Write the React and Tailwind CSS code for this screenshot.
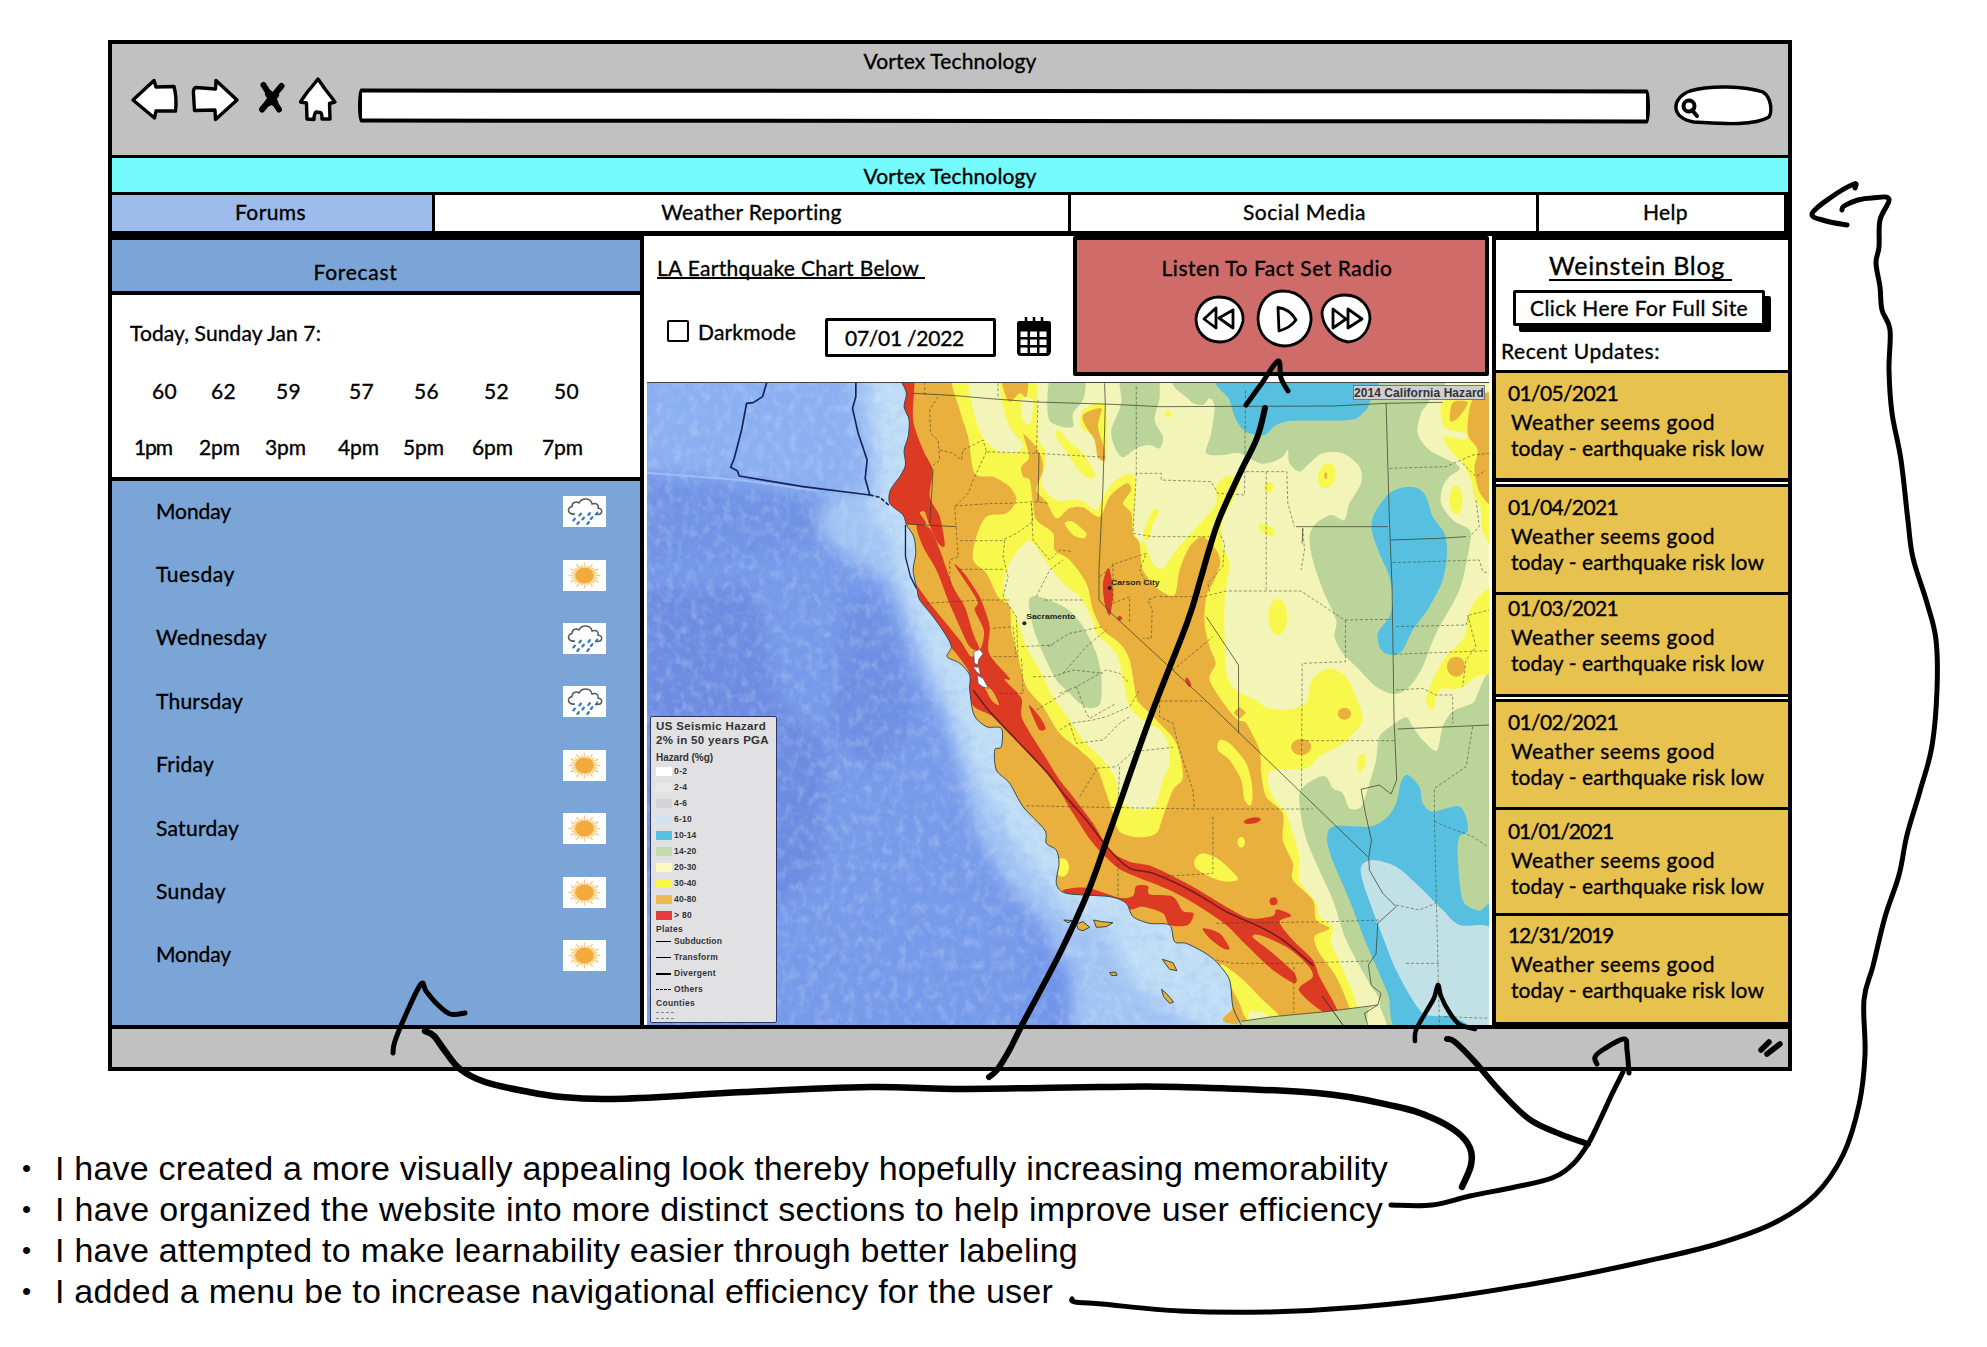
import React, { useLayoutEffect, useRef } from "react";

/* Text set to a fixed measure: letter spacing is worked out from the natural width. */
function Fit({ w, children, className = "" }) {
  const ref = useRef(null);
  useLayoutEffect(() => {
    const el = ref.current;
    el.style.letterSpacing = "0px";
    const natural = el.getBoundingClientRect().width;
    const n = el.textContent.length;
    el.style.letterSpacing = (w - natural) / n + "px";
  }, [w, children]);
  return (
    <span ref={ref} className={"inline-block w-fit whitespace-pre leading-none " + className}>
      {children}
    </span>
  );
}

const pairs = (s) => s.trim().split(/\s+/).map((p) => p.split(",").map(Number));

/* Catmull-Rom curve through a list of points. */
function curve(s, closed = false, k = 7) {
  const p = pairs(s);
  const n = p.length;
  const at = (i) => (closed ? p[(i + n) % n] : p[Math.max(0, Math.min(n - 1, i))]);
  let d = `M${p[0][0]},${p[0][1]}`;
  for (let i = 0; i < (closed ? n : n - 1); i++) {
    const a = at(i - 1), b = at(i), c = at(i + 1), e = at(i + 2);
    d += `C${b[0] + (c[0] - a[0]) / k},${b[1] + (c[1] - a[1]) / k} ${c[0] - (e[0] - b[0]) / k},${c[1] - (e[1] - b[1]) / k} ${c[0]},${c[1]}`;
  }
  return closed ? d + "Z" : d;
}

const Blob = ({ p, f }) => <path d={curve(p, true)} fill={f} />;

const OR = "#e9b03e", RD = "#dd3a24", YE = "#f8f74c", CR = "#f3f5b8", GR = "#bbd499", BL = "#57c0e0", LT = "#c2e1e7";

const LAND =
  "785,36 800,70 793,110 808,150 805,200 793,240 797,285 780,320 752,360 750,400 790,435 800,465 822,500 828,550 820,600 832,660 840,690 880,740 915,790 935,830 922,860 960,880 990,915 990,960 1003,1035 1040,1070 1085,1075 1085,1130 1065,1140 1070,1200 1110,1240 1150,1310 1215,1380 1220,1420 1250,1440 1258,1480 1250,1540 1280,1570 1410,1580 1460,1600 1480,1640 1530,1660 1590,1665 1605,1715 1640,1720 1690,1745 1730,1775 1770,1830 1780,1910 1805,1965 2560,1965 2560,30 785,30";

const countyLines = [
  "855,36 855,75", "895,80 870,120 872,190 895,210 900,270 875,290", "900,240 940,250 965,270 970,240 1030,210 1040,245 1190,250 1400,262",
  "1040,245 1000,330 985,370 945,410 955,560", "945,408 1060,400 1110,400 1180,395 1230,400", "1195,90 1190,250", "1075,40 1075,85",
  "960,512 1085,512 1130,490 1180,455 1175,400", "955,560 930,570 930,650", "960,598 1095,598", "1095,510 1090,560 1105,620 1090,680 1130,740 1135,870",
  "860,700 940,695 1030,690 1110,690", "1060,775 1120,770 1130,860 1060,860", "1145,830 1240,825", "1175,400 1180,510 1230,570 1260,540 1300,545",
  "1190,680 1230,600 1270,570", "1215,690 1330,690", "1225,830 1290,790 1390,770", "1270,910 1340,830 1400,780", "1180,920 1240,920 1300,900 1390,910",
  "1260,970 1310,950 1400,900 1440,910 1470,940", "1310,950 1340,1030 1350,1045 1430,1000", "1080,970 1150,970 1145,860", "1190,1020 1290,960",
  "1260,1080 1290,1060 1360,1050 1400,1040 1470,1010 1500,960", "1290,1060 1310,1120 1390,1110 1440,1060 1470,1040", "1160,1307 1290,1310 1665,1317 2020,1317",
  "1560,990 1560,1040 1600,1060 1620,1140 1660,1260 1665,1317", "1370,1200 1365,1195 1430,1190 1480,1145 1600,1132", "1320,1280 1370,1200", "1440,1190 1435,1310",
  "1490,50 1490,310 1565,310 1565,330 1715,335 1735,370 1815,375 1818,60", "1490,310 1480,490 1540,500 1710,500", "1820,305 1942,305 1945,400 1965,470",
  "1880,305 1880,660", "1990,475 1995,540 1985,600", "1560,680 1690,680 1760,663 1985,663 2115,750 2255,748", "2118,750 2118,875 1988,880 1986,1260",
  "1710,665 1705,640 1750,590 1755,520 1740,490", "1380,620 1430,580 1520,550 1500,600 1520,640", "1420,580 1420,700 1470,680 1470,760",
  "1550,680 1525,690 1538,720 1535,805 1510,805", "1600,900 1720,800", "1560,993 1700,993", "1985,1112 2265,1112", "1720,1340 1720,1510 1560,1520",
  "1730,1660 2080,1655 2220,1650", "1730,1770 1780,1780 1960,1780 2190,1773", "1963,1790 1963,1930", "1435,1480 1435,1660", "2250,295 2420,290 2500,255 2550,250",
  "2260,578 2520,570 2530,605 2550,610", "2270,770 2480,765 2490,735 2550,720", "2265,853 2390,848 2550,842", "2270,960 2350,955 2390,975 2440,975 2440,1060",
  "2500,1070 2480,1190 2385,1255 2385,1340 2400,1965", "2385,1355 2460,1385 2500,1400 2545,1430", "2270,1605 2340,1620 2390,1600", "2300,1780 2400,1780",
  "2510,390 2520,470 2490,500", "2485,735 2510,830 2480,870 2470,950", "2470,280 2510,320 2540,300", "2415,1940 2550,1945",
];

const solidLines = [
  "820,70 900,74 960,78 1050,86 1190,96 1420,103 1560,110 2080,108 2240,100 2410,97", "1395,40 1397,105 1390,350 1378,600 1378,690 1410,725 1700,993 2185,1460",
  "1700,740 1797,885 1797,1090", "2240,100 2250,450 2258,650 2264,1050 2272,1230 2255,1272 2220,1245 2165,1258 2178,1330 2196,1410 2188,1462 2190,1500 2230,1570 2270,1610 2215,1660 2210,1750 2187,1785 2195,1845 2225,1870 2215,1905 2175,1930 2185,1965",
  "1970,470 2245,470", "2255,510 2400,505 2480,500", "1990,475 1988,520", "2275,1077 2390,1072 2550,1065", "870,290 880,300 870,460", "800,462 950,470", "1198,250 1195,395",
  "1805,1954 1900,1940 2060,1925 2215,1905",
];

function HazardMap() {
  return (
    <svg className="block h-full w-full" viewBox="21 36 2528 1929" preserveAspectRatio="none">
      <defs>
        <clipPath id="land"><path d={curve(LAND, true)} /></clipPath>
        <filter id="soft" x="-30%" y="-30%" width="160%" height="160%"><feGaussianBlur stdDeviation="24" /></filter>
        <filter id="relief" x="0" y="0" width="100%" height="100%">
          <feTurbulence type="fractalNoise" baseFrequency="0.028 0.042" numOctaves="5" seed="11" />
          <feColorMatrix values="0 0 0 0 .28  0 0 0 0 .4  0 0 0 0 .8  1.7 0 0 0 -.74" />
        </filter>
        <filter id="foam" x="0" y="0" width="100%" height="100%">
          <feTurbulence type="fractalNoise" baseFrequency="0.04 0.03" numOctaves="5" seed="4" />
          <feColorMatrix values="0 0 0 0 .75  0 0 0 0 .88  0 0 0 0 1  0 1.5 0 0 -.68" />
        </filter>
      </defs>
      <rect x="0" y="0" width="2600" height="2000" fill="#769aea" />
      <g filter="url(#soft)">
        <path d="M0,0H700V400L300,330L0,300Z" fill="#8bb0f2" />
        <path d="M0,320L300,345L520,385L560,520L380,560L0,600Z" fill="#7093e5" />
        <path d="M0,650H340L420,1000L560,1120L540,1500L300,1700L0,1500Z" fill="#6c8be1" />
        <path d={curve("650,0 655,150 690,330 560,400 540,480 620,560 740,640 790,760 840,900 900,1010 960,1200 1020,1400 1120,1560 1240,1700 1280,1980 1850,1980 1800,1500 1300,900 900,300 850,0", true)} fill="#a3c5f4" />
        <path d={curve("700,0 720,300 700,420 760,520 780,640 830,760 880,900 960,1080 1000,1200 1120,1400 1200,1520 1300,1640 1420,1700 1500,1850 1800,1980 1800,1500 1300,900 900,300 850,0", true)} fill="#c0def6" />
        <path d="M1180,1700L1300,1790L1300,2000H1150Z" fill="#6f94ea" />
        <path d="M610,680L690,670L790,850L820,1080L700,1200L560,1100Z" fill="#6d8fe3" />
      </g>
      <rect x="21" y="36" width="2528" height="1929" filter="url(#relief)" opacity=".32" />
      <rect x="21" y="36" width="2528" height="1929" filter="url(#foam)" opacity=".38" />
      <path d="M21,308L300,330L530,362" fill="none" stroke="#a9c8f6" strokeWidth="6" opacity=".7" />
      <g fill="none" stroke="#14235c" strokeWidth="5" strokeLinejoin="round">
        <path d="M381,36L368,80L340,98L320,100L305,180L283,265L272,292L292,302L298,318L490,350L690,375L676,325L682,270L655,190L638,115L648,80L648,36" />
        <path d="M690,375L720,382L750,408" strokeDasharray="12 6" />
        <path d="M797,465V560L812,620L830,655" strokeWidth="4" />
      </g>

      <g clipPath="url(#land)">
        <rect x="700" y="0" width="1900" height="2000" fill={CR} />
        <Blob f={YE} p="945,20 1190,20 1195,180 1220,260 1205,340 1250,390 1320,390 1370,420 1390,380 1430,330 1485,320 1482,500 1515,520 1540,580 1570,595 1610,540 1690,450 1730,400 1730,350 1760,320 1800,330 1780,390 1750,450 1750,530 1770,580 1755,700 1760,900 1790,960 1850,990 1880,1012 1940,1020 2000,1000 2010,950 2025,920 2070,895 2120,920 2150,980 2170,1040 2160,1070 2110,1120 2040,1160 2000,1195 1900,1200 1885,1230 1900,1280 1940,1330 1960,1390 1980,1460 1980,1530 2030,1600 2040,1640 2080,1670 2075,1720 2120,1820 2155,1915 2150,1980 900,1980 600,1000 600,20" />
        <Blob f={OR} p="600,20 945,20 1150,190 1200,250 1210,300 1190,360 1220,395 1250,445 1290,415 1330,412 1380,440 1410,380 1460,340 1475,360 1450,400 1475,430 1480,490 1500,520 1510,600 1560,660 1605,675 1620,600 1650,530 1690,500 1730,540 1742,580 1720,640 1700,680 1695,760 1710,830 1728,880 1710,930 1760,1010 1795,1050 1820,1060 1860,1140 1865,1210 1880,1280 1930,1330 1930,1410 1960,1480 1960,1530 2020,1590 2030,1650 2070,1675 2025,1700 2040,1750 2090,1820 2130,1915 2140,1990 900,1990 600,1000" />
        <Blob f={YE} p="945,10 960,120 985,200 1005,310 1060,320 1110,350 1130,390 1100,430 1040,440 1010,500 1000,570 1040,610 1075,680 1110,710 1115,780 1135,860 1160,950 1210,1010 1260,1090 1320,1140 1370,1190 1400,1270 1420,1330 1440,1385 1500,1402 1550,1390 1570,1340 1600,1260 1630,1220 1610,1120 1560,1060 1500,1000 1490,980 1470,870 1440,820 1390,780 1360,720 1340,640 1290,570 1245,540 1240,490 1190,450 1180,400 1170,330 1150,320 1145,290 1168,260 1150,190 1130,100 1140,10" />
        <Blob f={CR} p="985,10 1070,10 1085,90 1110,170 1150,225 1120,250 1060,235 1015,170" />
        <Blob f={OR} p="1090,20 1160,20 1160,80 1140,70 1110,95 1092,60" />
        <Blob f={CR} p="1145,90 1180,90 1172,160 1150,150" />
        <Blob f={CR} p="1195,30 1240,30 1232,150 1300,170 1370,110 1392,250 1350,330 1290,385 1250,388 1212,340 1220,250 1195,200" />
        <Blob f={CR} p="1160,515 1120,560 1095,620 1095,680 1130,740 1160,830 1200,900 1240,980 1290,1050 1330,1110 1390,1170 1425,1220 1440,1280 1470,1315 1520,1320 1550,1300 1570,1230 1590,1180 1585,1120 1560,1080 1510,1050 1470,1010 1450,930 1430,850 1370,790 1360,750 1320,680 1270,640 1210,560 1180,518" />
        <Blob f={GR} p="1168,690 1200,680 1280,715 1330,770 1370,850 1385,920 1382,1000 1350,1015 1320,1000 1280,960 1250,930 1210,850 1180,770" />
        <Blob f={GR} p="1235,20 1330,20 1332,85 1300,130 1300,170 1260,168 1225,140" />
        <Blob f={GR} p="1445,20 1548,20 1560,80 1545,150 1570,200 1560,235 1530,225 1490,235 1450,262 1425,230 1415,180 1445,100" />
        <Blob f={YE} p="1255,180 1290,215 1330,250 1365,310 1355,325 1325,310 1290,260 1250,200" />
        <Blob f={YE} p="1330,120 1395,105 1400,250 1375,260 1360,200 1325,170" />
        <Blob f={OR} p="1335,130 1385,115 1375,170 1395,240 1395,272 1375,262 1365,210 1345,180 1330,150" />
        <Blob f={YE} p="1275,460 1300,455 1340,490 1330,505 1300,495" />

        <Blob f={GR} p="1645,20 1650,90 1690,105 1710,85 1725,110 1715,190 1700,250 1750,255 1800,250 1860,280 1900,275 1930,260 1945,240 1950,280 1980,305 2010,280 2050,250 2110,250 2160,290 2165,340 2130,400 2115,450 2075,435 2030,460 2010,500 2020,570 2050,660 2090,750 2085,800 2110,850 2160,900 2210,950 2265,972 2310,950 2350,890 2390,790 2460,660 2490,530 2490,480 2440,450 2405,400 2410,350 2430,320 2460,290 2370,240 2335,190 2345,130 2370,90 2370,20" />
        <Blob f={BL} p="1750,20 1770,90 1790,150 1820,185 1875,195 1910,165 1960,152 2130,150 2170,130 2190,100 2190,20" />
        <Blob f={BL} p="2295,352 2250,370 2205,430 2197,480 2220,550 2250,620 2260,690 2250,740 2215,790 2225,840 2260,855 2290,840 2320,780 2370,710 2410,630 2423,550 2415,490 2380,440 2360,380 2335,355" />
        <Blob f={YE} p="2410,95 2510,95 2560,300 2560,520 2530,480 2525,420 2505,380 2495,330 2470,280 2440,250 2412,200 2475,210 2480,190 2415,170" />
        <Blob f={OR} p="2500,90 2570,90 2570,390 2525,375 2505,300 2515,240 2485,190" />
        <Blob f={OR} p="2440,98 2485,98 2455,145 2432,152" />
        <Blob f={YE} p="2560,665 2510,690 2485,740 2475,800 2420,860 2380,930 2360,990 2380,1020 2400,960 2460,955 2510,920 2560,890" />
        <Blob f={GR} p="2560,970 2500,1000 2440,1025 2410,1070 2392,1142 2350,1110 2320,1070 2300,1042 2260,1065 2220,1100 2210,1170 2190,1240 2165,1310 2130,1315 2110,1270 2080,1255 2060,1220 2030,1225 1980,1270 1995,1390 2030,1480 2080,1590 2120,1710 2190,1840 2220,1890 2245,1990 2570,1990" />
        <Blob f={BL} p="2305,1215 2340,1250 2350,1300 2380,1325 2455,1308 2480,1340 2485,1385 2460,1400 2455,1460 2465,1570 2480,1605 2520,1622 2570,1618 2570,1990 2285,1985 2245,1870 2180,1720 2130,1590 2075,1460 2063,1400 2085,1368 2190,1370 2240,1345 2270,1300 2285,1235" />
        <Blob f={LT} p="2200,1470 2165,1490 2175,1550 2230,1700 2270,1800 2320,1890 2360,1935 2440,1940 2500,1970 2570,1990 2570,1692 2460,1665 2410,1620 2340,1550 2270,1490" />
        <ellipse cx="2450" cy="390" rx="20" ry="42" fill={YE} />
        <ellipse cx="2450" cy="890" rx="27" ry="30" fill={OR} />
        <ellipse cx="2062" cy="317" rx="26" ry="38" fill={YE} transform="rotate(15 2062 317)" />
        <ellipse cx="2059" cy="317" rx="4" ry="10" fill={OR} />
        <ellipse cx="1915" cy="740" rx="28" ry="54" fill={YE} />
        <ellipse cx="1888" cy="352" rx="14" ry="16" fill={YE} />
        <ellipse cx="1882" cy="480" rx="28" ry="14" fill={YE} transform="rotate(30 1882 480)" />
        <circle cx="1585" cy="132" r="10" fill={YE} />
        <path d="M1548,425L1530,460L1520,500" stroke={YE} strokeWidth="20" strokeLinecap="round" fill="none" />
        <ellipse cx="2115" cy="1031" rx="20" ry="18" fill={OR} />
        <path d="M1782,1028L1800,1010L1820,1028L1800,1046Z" fill={OR} />
        <ellipse cx="1985" cy="1131" rx="30" ry="24" fill={OR} />
        <ellipse cx="2165" cy="1178" rx="12" ry="27" fill={YE} transform="rotate(12 2165 1178)" />

        <Blob f={YE} p="1740,1110 1770,1120 1820,1180 1838,1250 1835,1305 1815,1290 1805,1230 1770,1170 1735,1140" />
        <Blob f={YE} p="1665,1470 1690,1450 1740,1470 1795,1525 1760,1535 1710,1520 1670,1495" />
        <ellipse cx="1805" cy="1417" rx="11" ry="16" fill={YE} />
        <Blob f={YE} p="1742,1785 1800,1820 1860,1880 1920,1945 1830,1955 1795,1890" />
        <Blob f={CR} p="1830,1925 1875,1930 1890,1950 1835,1955" />
        <ellipse cx="1268" cy="1492" rx="20" ry="28" fill={YE} />

        <Blob f={RD} p="775,20 822,20 820,150 850,240 878,300 870,380 900,440 915,525 895,520 868,462 855,425 840,430 858,462 795,460 740,420 740,340 780,300 785,240 800,150" />
        <Blob f={RD} p="830,465 870,475 900,540 940,650 975,710 1000,790 1020,840 990,830 960,770 925,690 890,600 850,530" />
        <Blob f={RD} p="945,585 975,612 1015,672 1030,705 1050,770 1048,850 1110,925 1095,930 1145,985 1147,1045 1210,1150 1260,1230 1300,1280 1360,1360 1410,1440 1470,1475 1540,1490 1660,1550 1760,1610 1830,1645 1900,1638 1912,1618 1956,1637 1920,1655 1960,1710 2020,1770 2040,1820 2095,1925 2050,1925 1978,1860 2020,1820 2000,1780 1940,1730 1860,1695 1840,1702 1900,1750 1965,1810 1965,1840 1900,1800 1820,1725 1760,1665 1680,1610 1590,1560 1490,1520 1430,1490 1360,1420 1300,1330 1260,1262 1220,1205 1130,1110 1060,1040 1003,1010 985,960 985,900 900,790 830,690 825,640 870,700 960,810 995,860 1025,830 1032,780 1005,720 1012,690" />
        <Blob f={OR} p="1030,940 1060,965 1078,1005 1055,990" />
        <Blob f={RD} p="1270,1560 1340,1553 1440,1583 1480,1578 1490,1548 1525,1548 1530,1573 1600,1580 1630,1623 1662,1630 1645,1665 1590,1665 1570,1630 1510,1610 1470,1618 1420,1587 1300,1575" />
        <Blob f={RD} p="1690,1675 1740,1690 1770,1735 1750,1735 1710,1705" />
        <Blob f={RD} p="1405,595 1415,620 1420,680 1410,737 1395,700 1390,640" />
        <Blob f={RD} p="1168,1005 1200,1040 1218,1075 1200,1080 1180,1040" />
        <ellipse cx="1838" cy="1352" rx="26" ry="9" fill={RD} transform="rotate(-10 1838 1352)" />
        <circle cx="1902" cy="1594" r="12" fill={RD} />
        <ellipse cx="1646" cy="937" rx="6" ry="15" fill={RD} transform="rotate(-25 1646 937)" />
        <circle cx="1440" cy="745" r="7" fill={RD} />
        <path d="M1795,1954L1900,1940L2060,1925L2200,1908L2175,1970H1795Z" fill={GR} />
        <path d="M2188,1915L2220,1905L2245,1970H2178Z" fill={CR} />

        <g fill="none" stroke="#3c3c2c" strokeWidth="2.6" strokeLinejoin="round">
          {countyLines.map((l, i) => <polyline key={i} points={l} strokeDasharray="9 6" opacity=".62" />)}
          {solidLines.map((l, i) => <polyline key={i} points={l} opacity=".85" />)}
        </g>
        <path d={curve("1000,960 1050,1025 1130,1110 1220,1205 1270,1270 1340,1350 1410,1440 1470,1495 1540,1510 1660,1565 1760,1625 1860,1670 1930,1710 2022,1787")} fill="none" stroke="#7c1c1c" strokeWidth="5" />
        <path d="M2048,1878L2112,1967" stroke="#333" strokeWidth="3" />
      </g>
      <g fill="#fff" stroke="#3a4a5a" strokeWidth="2">
        <path d="M1002,845L1020,838L1030,852L1018,866L1014,885L1004,880Z" />
        <path d="M1000,890L1018,892L1022,915L1010,905Z" />
        <path d="M1012,915L1030,925L1046,955L1028,950L1015,940Z" />
      </g>
      <path d={curve(LAND.replace(" 2560,1965 2560,30 785,30", ""))} fill="none" stroke="#2f4a5c" strokeWidth="3" />
      <g fill={OR} stroke="#33463c" strokeWidth="3">
        <path d="M1310,1662L1330,1655L1350,1672L1330,1682L1316,1678Z" />
        <path d="M1362,1650L1385,1655L1420,1658L1400,1670L1370,1672Z" />
        <path d="M1272,1650L1300,1652L1285,1658Z" />
        <path d="M1568,1768L1600,1778L1612,1802L1590,1798Z" />
        <path d="M1410,1808L1428,1806L1432,1816L1415,1816Z" />
        <path d="M1566,1858L1580,1870L1602,1896L1590,1900L1572,1880Z" />
      </g>
      <g fontFamily="'Liberation Sans', sans-serif" fontWeight="bold" fontSize="24" fill="#1d241a">
        <circle cx="1154" cy="760" r="6" />
        <text x="1160" y="746" textLength="147" lengthAdjust="spacingAndGlyphs">Sacramento</text>
        <circle cx="1410" cy="654" r="6" />
        <text x="1414" y="646" textLength="146" lengthAdjust="spacingAndGlyphs">Carson City</text>
      </g>
      <rect x="21" y="36" width="2528" height="3" fill="#444" />
    </svg>
  );
}

const hazards = [
  ["bg-white", "0-2"], ["bg-[#e8e8e8]", "2-4"], ["bg-[#d4d4d6]", "4-6"], ["bg-[#cfe3f2]", "6-10"], ["bg-[#57c0e6]", "10-14"],
  ["bg-[#c0dcae]", "14-20"], ["bg-[#fbfbc0]", "20-30"], ["bg-[#f8f74c]", "30-40"], ["bg-[#efb850]", "40-80"], ["bg-[#e23c3c]", "> 80"],
];
const plates = [
  ["border-t border-black", "Subduction", 48], ["border-t border-black", "Transform", 44],
  ["border-t-2 border-black", "Divergent", 42], ["border-t border-dashed border-black", "Others", 29],
];

function Legend() {
  return (
    <div className="absolute bottom-[2px] left-[3px] h-[307px] w-[127px] rounded-[2px] border-[1.5px] border-[#2c3668] bg-[#e1e1e3] pl-[5px] pt-[3px] font-['Liberation_Sans',sans-serif] font-bold text-[#333] [-webkit-text-stroke:0]">
      <div className="flex h-[14px] items-center text-[11.5px]"><Fit w={110}>US Seismic Hazard</Fit></div>
      <div className="flex h-[14px] items-center text-[11.5px]"><Fit w={113}>2% in 50 years PGA</Fit></div>
      <div className="flex h-[20px] items-center text-[10px]"><Fit w={57}>Hazard (%g)</Fit></div>
      {hazards.map(([c, t]) => (
        <div key={t} className="flex h-[16.07px] -translate-y-[5px] items-center gap-[2px] text-[8.5px] leading-none">
          <span className={"h-[9px] w-[16px] " + c} />
          <Fit w={t.length * 4.5}>{t}</Fit>
        </div>
      ))}
      <div className="-mt-[4px] flex h-[9px] items-center text-[8.5px]"><Fit w={27}>Plates</Fit></div>
      {plates.map(([c, t, w]) => (
        <div key={t} className="flex h-[16px] items-center gap-[3px] text-[8.5px]">
          <span className={"w-[15px] " + c} />
          <Fit w={w}>{t}</Fit>
        </div>
      ))}
      <div className="mt-px flex h-[9px] items-center text-[8.5px]"><Fit w={39}>Counties</Fit></div>
      <div className="mt-1 w-[18px] border-t border-dashed border-[#888]" />
      <div className="mt-[5px] w-[18px] border-t border-dashed border-[#888]" />
    </div>
  );
}

function Rain() {
  const drops = [[17, 18.5], [26, 18], [33.5, 17.5], [11, 23.5], [20, 22.5], [28.5, 22], [15, 27], [25, 27]];
  return (
    <svg width="43" height="31" viewBox="0 0 43 31" className="bg-white">
      <path d="M12,18C5,19 3,12 9,10.5C9,6 14,5 16,7C19,1 28,2 29,8C34,6 36,10 35,12C41,13 39,19 34,18.5" fill="none" stroke="#555a5e" strokeWidth="1.5" />
      {drops.map(([x, y]) => <path key={x + "-" + y} d={`M${x + 0.8},${y - 0.8}L${x - 0.6},${y + 0.9}`} stroke="#3878bd" strokeWidth="2.3" strokeLinecap="round" />)}
    </svg>
  );
}
function SunIcon() {
  return (
    <svg width="43" height="31" viewBox="0 0 43 31" className="bg-white">
      {Array.from({ length: 24 }, (_, i) => {
        const a = (i * Math.PI) / 12, r = i % 2 ? 12 : 14.5;
        return <path key={i} d={`M${21.5 + 9 * Math.cos(a)},${15.5 + 7.5 * Math.sin(a)}L${21.5 + (r + 1.5) * Math.cos(a)},${15.5 + (r - 1.5) * Math.sin(a)}`} stroke="#f5cf86" strokeWidth="1.5" />;
      })}
      <ellipse cx="21.5" cy="15.5" rx="11" ry="9.2" fill="#f8d795" />
      <ellipse cx="21.5" cy="15.5" rx="9.3" ry="7.7" fill="#f2ab3a" />
    </svg>
  );
}

const days = [
  ["Monday", 75, Rain], ["Tuesday", 79, SunIcon], ["Wednesday", 111, Rain], ["Thursday", 87, Rain],
  ["Friday", 58, SunIcon], ["Saturday", 83, SunIcon], ["Sunday", 70, SunIcon], ["Monday", 75, SunIcon],
];

function Forecast() {
  return (
    <section className="flex w-[532px] flex-col border-r-4 border-t-4 border-black bg-[#7ba5d7]">
      <div className="flex h-[55px] items-center justify-center border-b-4 border-black pr-[41px] pt-[11px]"><Fit w={84}>Forecast</Fit></div>
      <div className="h-[186px] border-b-4 border-black bg-white">
        <div className="flex h-[74px] items-center pl-[18px]"><Fit w={191}>Today, Sunday Jan 7:</Fit></div>
        <div className="grid h-[42px] grid-cols-[59px_65px_73px_65px_70px_70px_30px] items-center pl-[40px]">
          {["60", "62", "59", "57", "56", "52", "50"].map((t) => <Fit key={t} w={25}>{t}</Fit>)}
        </div>
        <div className="mt-[14px] grid h-[42px] grid-cols-[65px_66px_73px_65px_69px_70px_50px] items-center pl-[22px]">
          {[1, 2, 3, 4, 5, 6, 7].map((t) => <Fit key={t} w={t === 1 ? 38 : 41}>{t + "pm"}</Fit>)}
        </div>
      </div>
      <div className="-mt-px flex flex-col">
        {days.map(([d, w, Icon], i) => (
          <div key={i} className="flex h-[63.4px] items-center justify-between pl-[44px] pr-[34px]">
            <Fit w={w} className="mb-[3px]">{d}</Fit>
            <Icon />
          </div>
        ))}
      </div>
    </section>
  );
}

function Toolbar() {
  const line = { fill: "#fff", stroke: "#000", strokeWidth: 3.4, strokeLinejoin: "round" };
  return (
    <div className="flex items-start">
      <svg className="ml-[18px]" width="50" height="54" viewBox="130 72 50 54" {...line}><path d="M133,100L154,80.500L156,87L174,86.500Q177,98 175.500,111L156,111L154.500,118Z" /></svg>
      <svg className="ml-[10px]" width="52" height="54" viewBox="190 72 52 54" {...line}><path d="M237,100L216,80.500L215.500,89L196,87.500Q193,88 193.500,94L194.500,110.500L215,110L215.500,119.500Z" /></svg>
      <svg className="ml-[12px]" width="36" height="54" viewBox="254 72 36 54" stroke="#000" strokeLinecap="round"><path d="M263.500,85L279,109.500M281.500,86L262,109.500" strokeWidth="6" /><path d="M269,94L274,102M275,95L269,102" strokeWidth="8" /></svg>
      <svg className="ml-[8px]" width="42" height="54" viewBox="298 72 42 54" {...line}><path d="M318,79L325,89L335,102L329.500,103.500L330,119L322,119Q322,112 320,112.500L316,112Q314,114 314,119.500L307,119L306.500,103L300.500,102Q307,92 310,89Z" /></svg>
      <div className="ml-[18px] mt-[17px] h-[34px] w-[1292px] rotate-[0.04deg] rounded-[3px/16px] border-[4px] border-black bg-white" />
      <svg className="ml-[23px]" width="102" height="60" viewBox="1673 72 102 60" {...line}>
        <path d="M1694,122C1670,118 1671,98 1690,91C1710,85 1745,86 1763,92C1772,98 1772,112 1769,117C1752,127 1715,123 1694,122Z" />
        <circle cx="1689" cy="106" r="5.500" strokeWidth="4" /><path d="M1692,110L1697,116" strokeLinecap="round" strokeWidth="4" />
      </svg>
    </div>
  );
}

function MediaButtons() {
  const s = { fill: "#fff", stroke: "#000", strokeWidth: 2.8, strokeLinejoin: "round" };
  return (
    <svg width="180" height="60" viewBox="1194 288 180 60" {...s}>
      <path d="M1219,296C1236,296 1244,309 1243,320C1240,334 1231,341 1220,341C1206,341 1196,331 1196,318C1197,305 1206,296 1219,296Z" />
      <path d="M1283,290C1302,290 1312,306 1311,320C1309,337 1297,345 1284,345C1268,344 1258,333 1258,317C1259,301 1268,290 1283,290Z" />
      <path d="M1345,294C1361,294 1370,306 1370,318C1368,332 1360,340 1348,341C1334,339 1322,325 1322,311C1324,300 1334,294 1345,294Z" />
      <path d="M1216,307L1204,318L1216,327Z M1233,309L1219,317L1233,327Z" />
      <path d="M1278,306.500Q1290,308 1296,319Q1290,327 1279,330Z" />
      <path d="M1333,308V327L1346,318Z M1348,308V327L1362,318Z" />
    </svg>
  );
}

function Center() {
  return (
    <section className="flex w-[848px] flex-col pl-[3px]">
      <div className="flex h-[146px] justify-between">
        <div className="pl-[10px]">
          <div className="mt-[21px] flex h-[22px] w-fit items-start border-b-2 border-black pr-[6px]"><Fit w={262}>LA Earthquake Chart Below</Fit></div>
          <div className="mt-[35px] flex h-[46px] items-center">
            <span className="ml-[10px] mt-[-12px] h-[22px] w-[22px] rounded-[2px] border-[2.500px] border-black" />
            <span className="ml-[9px] mt-[-12px] flex w-[98px]"><Fit w={98}>Darkmode</Fit></span>
            <span className="ml-[29px] flex h-[39px] w-[171px] items-center rounded-[2px] border-[3.500px] border-black pl-[17px]"><Fit w={119}>07/01 /2022</Fit></span>
            <svg className="ml-[20px]" width="36" height="42" viewBox="0 0 36 42">
              <path d="M10,1V8M18,1V8M26,1V8" stroke="#000" strokeWidth="2.500" />
              <path d="M3,5H33Q35,5 35,8V36Q34,40 31,40H5Q1,40 1,36V8Q1,5 3,5Z" />
              {[15.5, 23.5, 31.5].map((y) => [4.5, 14, 23.5].map((x) => <rect key={x + "," + y} x={x} y={y} width="7" height="5.500" fill="#fff" />))}
            </svg>
          </div>
        </div>
        <div className="mr-[3px] flex h-[140px] w-[416px] flex-col items-center rounded-[2px] border-4 border-black bg-[#cf6b69] pr-[8px] pt-[17px]">
          <Fit w={231}>Listen To Fact Set Radio</Fit>
          <div className="ml-[14px] mt-[11px]"><MediaButtons /></div>
        </div>
      </div>
      <div className="relative h-[643px] w-[842px]">
        <HazardMap />
        <div className="absolute right-[4px] top-[3px] flex h-[15px] w-[132px] items-center border border-[#777] bg-[#d0d0d3] font-['Liberation_Sans',sans-serif] text-[12px] font-bold text-[#333] [-webkit-text-stroke:0]"><Fit w={130}>2014 California Hazard</Fit></div>
        <Legend />
      </div>
    </section>
  );
}

const posts = [
  ["01/05/2021", 110, "h-[109px] border-b-4 pt-[9px]"],
  ["01/04/2021", 110, "mt-[2px] h-[111px] border-y-[3px] pt-[9px]"],
  ["01/03/2021", 110, "h-[102px] border-b-[3px] pt-[2px]"],
  ["01/02/2021", 110, "mt-[2px] h-[111px] border-y-[3px] pt-[9px]"],
  ["01/01/2021", 105, "h-[106px] border-b-[3px] pt-[10px]"],
  ["12/31/2019", 105, "h-[110px] border-b-4 pt-[8px]"],
];

function Blog() {
  return (
    <section className="flex w-[296px] flex-col border-l-4 border-t-4 border-black bg-white">
      <div className="flex h-[133px] shrink-0 flex-col border-b-[3px] border-black">
        <div className="ml-[53px] mt-[13px] flex h-[28px] w-fit items-start border-b-2 border-black pr-[7px]"><Fit w={176} className="text-[25px]">Weinstein Blog</Fit></div>
        <div className="ml-[17px] mt-[9px] flex h-[36px] w-[252px] items-center justify-center rounded-[2px] border-[3px] border-black bg-white pb-px shadow-[6px_6px_0_0_#000]"><Fit w={218}>Click Here For Full Site</Fit></div>
        <div className="ml-[5px] mt-[13px] flex h-[22px] items-end"><Fit w={159}>Recent Updates:</Fit></div>
      </div>
      {posts.map(([d, w, c]) => (
        <article key={d} className={"flex shrink-0 flex-col border-black bg-[#e7c24f] pl-[12px] " + c}>
          <div className="flex h-[20px] items-center"><Fit w={w}>{d}</Fit></div>
          <div className="mt-[6px] flex h-[26px] items-center pl-[3px]"><Fit w={204}>Weather seems good</Fit></div>
          <div className="flex h-[26px] items-center pl-[3px]"><Fit w={253}>today - earthquake risk low</Fit></div>
        </article>
      ))}
    </section>
  );
}

const arrows = [
  [5, "393,1053 395,1041 407,1012 421,984 426,991 436,1003 450,1014 465,1013"],
  [6.5, "425,1031 434,1036 445,1051 460,1069 485,1082 529,1092 562,1097 603,1099 660,1097 744,1092 870,1087 954,1089 1100,1087 1180,1087 1317,1093 1394,1106 1430,1117 1457,1132 1470,1148 1471,1165 1462,1187"],
  [5, "1391,1205 1432,1205 1470,1196 1515,1187 1552,1178 1573,1164 1588,1144 1600,1120 1612,1094 1623,1072"],
  [5, "1597,1064 1595,1057 1604,1049 1624,1039 1627,1050 1629,1073"],
  [6, "1447,1039 1455,1042 1475,1062 1500,1091 1529,1119 1560,1134 1588,1144"],
  [4.5, "1415,1041 1416,1030 1426,1012 1434,998 1438,985 1441,996 1448,1010 1459,1024 1475,1029"],
  [6, "989,1077 997,1070 1010,1049 1023,1023 1060,953 1088,892 1110,831 1150,718 1187,623 1200,581 1209,550 1220,517 1240,473 1257,438 1265,408"],
  [5, "1246,405 1262,383 1278,361 1281,378 1288,391"],
  [5, "1855,188 1854,184 1830,198 1812,214 1826,221 1847,225"],
  [5, "1842,210 1844,206 1858,200 1872,198 1889,199 1880,220 1879,247 1876,263 1880,287 1882,310 1890,330 1889,370 1892,413 1901,460 1908,521 1913,558 1927,603 1936,640 1937,690 1932,746 1920,791 1907,835 1899,875 1885,917 1873,966 1864,1000 1865,1055 1859,1105 1843,1155 1815,1195 1774,1223 1717,1244 1647,1261 1560,1279 1457,1296 1360,1307 1267,1312 1180,1311 1102,1304 1075,1302 1072,1299"],
];

const notes = [
  ["I have created a more visually appealing look thereby hopefully increasing memorability", 1333],
  ["I have organized the website into more distinct sections to help improve user efficiency", 1328],
  ["I have attempted to make learnability easier through better labeling", 1023],
  ["I added a menu be to increase navigational efficiency for the user", 998],
];

export default function App() {
  return (
    <div className="relative h-[1347px] w-[1987px] overflow-hidden bg-white pt-[40px] font-[Lato,sans-serif] text-[21px] text-black [-webkit-text-stroke:0.35px]">
      <main className="ml-[108px] flex h-[1031px] w-[1684px] flex-col border-4 border-black">
        <header className="h-[111px] bg-[#c1c1c1]">
          <div className="flex h-[28px] items-end justify-center pb-px"><Fit w={173}>Vortex Technology</Fit></div>
          <Toolbar />
        </header>
        <div className="flex h-[37px] items-center justify-center border-t-[3px] border-black bg-[#75fafd]"><Fit w={173}>Vortex Technology</Fit></div>
        <nav className="flex h-[44px] border-b-[5px] border-t-[3px] border-black bg-white">
          <div className="flex w-[320px] items-center justify-center bg-[#9dbbeb] pb-[4px] pr-[3px]"><Fit w={71}>Forums</Fit></div>
          <div className="flex w-[636px] items-center justify-center border-l-[3px] border-black pb-[4px]"><Fit w={181}>Weather Reporting</Fit></div>
          <div className="flex w-[468px] items-center justify-center border-l-[3px] border-black pb-[4px] pl-[2px]"><Fit w={123}>Social Media</Fit></div>
          <div className="flex flex-1 items-center justify-center border-l-[3px] border-r-4 border-black pb-[4px] pl-[8px]"><Fit w={45}>Help</Fit></div>
        </nav>
        <div className="flex h-[789px]">
          <Forecast />
          <Center />
          <Blog />
        </div>
        <footer className="flex h-[42px] items-center justify-end border-t-4 border-black bg-[#c1c1c1] pr-[4px]">
          <svg width="28" height="22" viewBox="0 0 28 22" stroke="#000" strokeWidth="5.500" strokeLinecap="round"><path d="M5,13L13,5M11,17L24,7" /></svg>
        </footer>
      </main>

      <ul className="mt-[76px] font-['Liberation_Sans',sans-serif] text-[34px] [-webkit-text-stroke:0]">
        {notes.map(([t, w]) => (
          <li key={t} className="flex h-[41.1px] items-center pl-[22px]">
            <span className="w-[33px] text-[26px] leading-none">•</span>
            <Fit w={w}>{t}</Fit>
          </li>
        ))}
      </ul>

      <svg className="pointer-events-none absolute left-0 top-0" width="1987" height="1347" fill="none" stroke="#000" strokeLinecap="round" strokeLinejoin="round">
        {arrows.map(([w, p], i) => <path key={i} d={curve(p, false, 5.6)} strokeWidth={w} />)}
      </svg>
    </div>
  );
}
